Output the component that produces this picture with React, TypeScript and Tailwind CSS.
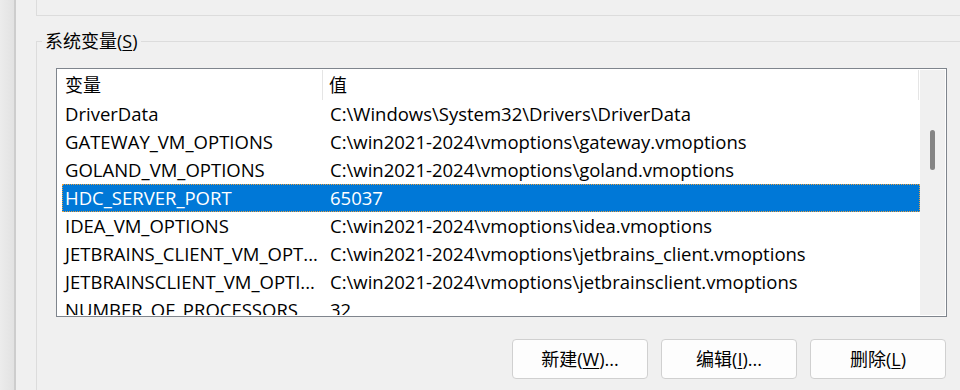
import React from 'react';

const rows = [
  { name: 'DriverData', value: 'C:\\Windows\\System32\\Drivers\\DriverData' },
  { name: 'GATEWAY_VM_OPTIONS', value: 'C:\\win2021-2024\\vmoptions\\gateway.vmoptions' },
  { name: 'GOLAND_VM_OPTIONS', value: 'C:\\win2021-2024\\vmoptions\\goland.vmoptions' },
  { name: 'HDC_SERVER_PORT', value: '65037', selected: true },
  { name: 'IDEA_VM_OPTIONS', value: 'C:\\win2021-2024\\vmoptions\\idea.vmoptions' },
  { name: 'JETBRAINS_CLIENT_VM_OPT...', value: 'C:\\win2021-2024\\vmoptions\\jetbrains_client.vmoptions' },
  { name: 'JETBRAINSCLIENT_VM_OPTI...', value: 'C:\\win2021-2024\\vmoptions\\jetbrainsclient.vmoptions' },
  { name: 'NUMBER_OF_PROCESSORS', value: '32' },
];

const font = { fontFamily: '"Open Sans", "Noto Sans CJK SC", sans-serif' };

const WinButton = ({ label, hotkey, tail }: { label: string; hotkey: string; tail: string }) => (
  <button className="w-[136px] h-[40px] rounded-[4px] border border-[#d0d0d0] bg-[#fdfdfd] text-[18px] text-black flex items-center justify-center">
    {label}(<span className="underline underline-offset-2">{hotkey}</span>){tail}
  </button>
);

export default function App() {
  return (
    <div className="w-[960px] h-[390px] bg-[#f0f0f0] flex overflow-hidden" style={font}>
      {/* window edge on the left */}
      <div className="w-[16px] h-full bg-gradient-to-r from-[#ececec] to-[#e2e2e2] border-r-2 border-[#cdcdcd]" />

      <div className="flex-1 flex flex-col pl-[20px]">
        {/* bottom of the user-variables group */}
        <div className="h-[16px] border-l border-b border-[#dcdcdc]" />

        {/* system variables group */}
        <div className="relative mt-[25px] flex-1 border-l border-t border-[#dcdcdc] pl-[19px] pt-[26px]">
          <div className="absolute left-[5px] -top-[14px] bg-[#f0f0f0] px-[3px] text-[18px] leading-[26px] text-black">
            系统变量(<span className="underline underline-offset-2">S</span>)
          </div>

          <div className="w-[891px] h-[249px] border border-[#7f858d] bg-white p-px flex">
            <div className="w-[862px] h-full overflow-hidden flex flex-col">
              {/* header */}
              <div className="h-[30px] flex shrink-0 text-[18px] text-black">
                <div className="w-[265px] pl-[7px] flex items-center border-r border-[#e5e5e5]">变量</div>
                <div className="flex-1 pl-[6px] flex items-center border-r border-[#e5e5e5]">值</div>
                <div className="w-[1px]" />
              </div>
              {rows.map((r) => (
                <div key={r.name} className="h-[28px] shrink-0 pl-[4px] flex">
                  <div
                    className={
                      r.selected
                        ? 'flex-1 flex items-center bg-[#0078d7] text-white outline-1 outline-dotted outline-[#e8a040] -outline-offset-1 text-[18.5px]'
                        : 'flex-1 flex items-center text-black text-[18.5px]'
                    }
                  >
                    <div className="w-[261px] pl-[3px] whitespace-nowrap overflow-hidden">{r.name}</div>
                    <div className="flex-1 pl-[7px] whitespace-nowrap">{r.value}</div>
                  </div>
                </div>
              ))}
            </div>
            {/* scrollbar */}
            <div className="w-[25px] h-full bg-[#f0f0f0] pt-[60px] flex justify-center">
              <div className="w-[5px] h-[40px] rounded-full bg-[#858585]" />
            </div>
          </div>

          <div className="w-[891px] mt-[22px] pr-px flex justify-end gap-[13px]">
            <WinButton label="新建" hotkey="W" tail="..." />
            <WinButton label="编辑" hotkey="I" tail="..." />
            <WinButton label="删除" hotkey="L" tail="" />
          </div>
        </div>
      </div>
    </div>
  );
}
